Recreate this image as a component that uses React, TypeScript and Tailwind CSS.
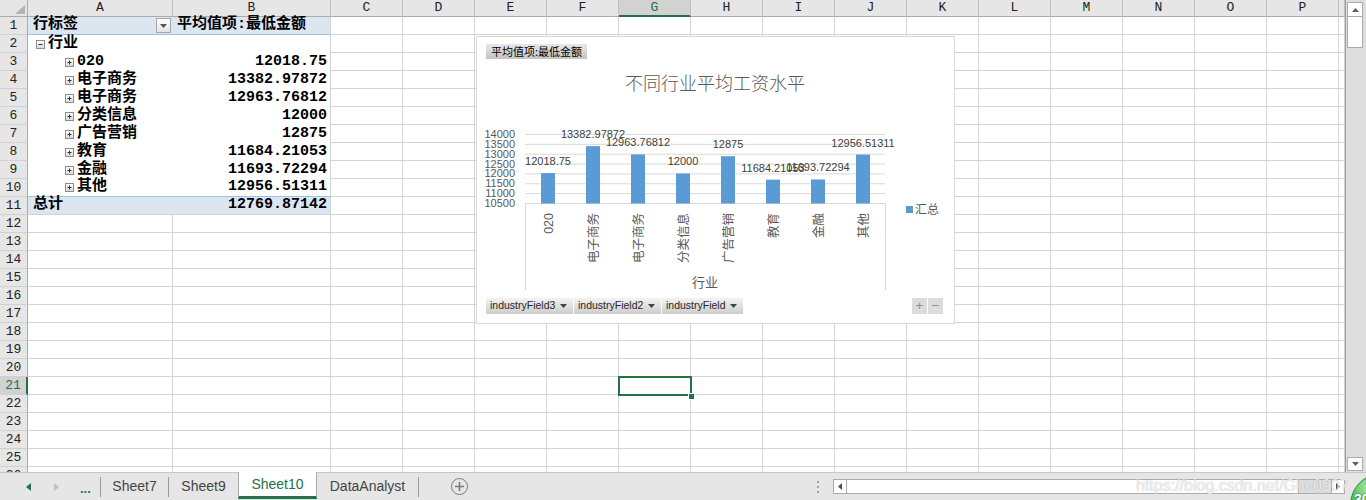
import React from 'react';

const COLS = ['A', 'B', 'C', 'D', 'E', 'F', 'G', 'H', 'I', 'J', 'K', 'L', 'M', 'N', 'O', 'P', 'Q'];

const widthOf = (c: string) =>
  c === 'A' ? 'w-[145px]' : c === 'B' ? 'w-[158px]' : c === 'Q' ? 'w-[6px]' : 'w-[72px]';

const pivotRows = [
  { kind: 'head', label: '行标签', value: '平均值项:最低金额' },
  { kind: 'group', label: '行业', value: '' },
  { kind: 'item', label: '020', value: '12018.75' },
  { kind: 'item', label: '电子商务', value: '13382.97872' },
  { kind: 'item', label: '电子商务', value: '12963.76812' },
  { kind: 'item', label: '分类信息', value: '12000' },
  { kind: 'item', label: '广告营销', value: '12875' },
  { kind: 'item', label: '教育', value: '11684.21053' },
  { kind: 'item', label: '金融', value: '11693.72294' },
  { kind: 'item', label: '其他', value: '12956.51311' },
  { kind: 'total', label: '总计', value: '12769.87142' },
];

const bars = [
  { name: '020', v: 12018.75, label: '12018.75' },
  { name: '电子商务', v: 13382.97872, label: '13382.97872' },
  { name: '电子商务', v: 12963.76812, label: '12963.76812' },
  { name: '分类信息', v: 12000, label: '12000' },
  { name: '广告营销', v: 12875, label: '12875' },
  { name: '教育', v: 11684.21053, label: '11684.21053' },
  { name: '金融', v: 11693.72294, label: '11693.72294' },
  { name: '其他', v: 12956.51311, label: '12956.51311' },
];

function ExpandBox({ open }: { open: boolean }) {
  return (
    <svg width="9" height="9" viewBox="0 0 9 9" className="shrink-0">
      <defs>
        <linearGradient id={open ? 'bxo' : 'bxc'} x1="0" y1="0" x2="0" y2="1">
          <stop offset="0" stopColor="#ffffff" />
          <stop offset="1" stopColor="#d8d8d8" />
        </linearGradient>
      </defs>
      <rect x="0.5" y="0.5" width="8" height="8" fill={`url(#${open ? 'bxo' : 'bxc'})`} stroke="#8c8c8c" />
      <path d="M2.5 4.5h4" stroke="#333" />
      {!open && <path d="M4.5 2.5v4" stroke="#333" />}
    </svg>
  );
}

function PivotCells({ row }: { row: number }) {
  const r = pivotRows[row - 1];
  const blue = r.kind === 'head' || r.kind === 'total';
  const bottom =
    row === 1 || row === 10
      ? 'border-b border-[#9bc2e6]'
      : row === 11
      ? 'border-b border-[#d4d4d4]'
      : '';
  const bg = blue ? 'bg-[#dce6f1]' : 'bg-white';
  return (
    <>
      <div className={`w-[145px] h-full shrink-0 flex items-center ${bg} ${bottom} relative`}>
        {r.kind === 'head' && (
          <>
            <span className="pl-[5px]">{r.label}</span>
            <div className="absolute right-[2px] top-[1px] w-[15px] h-[15px] border border-[#a6a6a6] bg-linear-to-b from-[#ffffff] to-[#e4e4e4] flex items-center justify-center">
              <svg width="7" height="4" viewBox="0 0 7 4">
                <path d="M0 0h7L3.5 4z" fill="#555" />
              </svg>
            </div>
          </>
        )}
        {r.kind === 'total' && <span className="pl-[5px]">{r.label}</span>}
        {r.kind === 'group' && (
          <div className="flex items-center pl-[8px] gap-[3px]">
            <ExpandBox open />
            <span>{r.label}</span>
          </div>
        )}
        {r.kind === 'item' && (
          <div className="flex items-center pl-[37px] gap-[3px]">
            <ExpandBox open={false} />
            <span>{r.label}</span>
          </div>
        )}
      </div>
      <div
        className={`w-[158px] h-full shrink-0 flex items-center border-r border-r-[#d4d4d4] ${bg} ${bottom} ${
          r.kind === 'head' ? 'justify-start pl-[4px]' : 'justify-end pr-[3px]'
        }`}
      >
        {r.value}
      </div>
    </>
  );
}

function GridRow({ row }: { row: number }) {
  const active = row === 21;
  return (
    <div className="flex h-[18px] shrink-0">
      <div
        className={`w-[28px] h-full shrink-0 flex items-center justify-center text-[13px] font-normal border-b border-b-[#d0d0d0] ${
          active
            ? 'bg-[#d2d2d2] text-[#217346] border-r-2 border-r-[#217346]'
            : 'bg-[#e6e6e6] text-[#222] border-r border-r-[#ababab]'
        } font-['Liberation_Mono',monospace]`}
      >
        {row}
      </div>
      {COLS.map((c) => {
        if (row <= 11 && (c === 'A' || c === 'B')) {
          return c === 'A' ? <PivotCells key={c} row={row} /> : null;
        }
        const sel = row === 21 && c === 'G';
        return (
          <div
            key={c}
            className={`${widthOf(c)} h-full shrink-0 border-r border-b border-[#d4d4d4] ${sel ? 'relative' : ''}`}
          >
            {sel && (
              <>
                <div className="absolute -left-[1px] -top-[1px] w-[74px] h-[20px] border-2 border-[#217346] z-10" />
                <div className="absolute left-[69px] top-[16px] w-[7px] h-[7px] bg-[#217346] border border-white z-20" />
              </>
            )}
          </div>
        );
      })}
    </div>
  );
}

function FieldButton({ label, w }: { label: string; w: string }) {
  return (
    <div
      className={`${w} h-[16px] flex items-center justify-between pl-[4px] pr-[6px] bg-linear-to-b from-[#f4f4f4] to-[#cdcdcd] text-[10.5px] text-[#262626] font-['Liberation_Sans',sans-serif]`}
    >
      <span>{label}</span>
      <svg width="7" height="4" viewBox="0 0 7 4">
        <path d="M0 0h7L3.5 4z" fill="#404040" />
      </svg>
    </div>
  );
}

function Chart() {
  const y = (v: number) => 166 - ((v - 10500) * 69) / 3500;
  const ticks = [14000, 13500, 13000, 12500, 12000, 11500, 11000, 10500];
  const sans = 'Liberation Sans, Noto Sans CJK SC, sans-serif';
  const cjk = 'Noto Sans CJK SC, sans-serif';
  return (
    <div className="absolute left-[476px] top-[36px] w-[479px] h-[288px] bg-white border border-[#d9d9d9] z-10 flex flex-col justify-between px-[9px] pt-[7px] pb-[9px] font-normal">
      <svg className="absolute left-0 top-0" width="477" height="286">
        <text x="238" y="53" textAnchor="middle" fontSize="18" fill="#595959" fontFamily={cjk} fontWeight="300">
          不同行业平均工资水平
        </text>
        {ticks.map((t) => (
          <g key={t}>
            <line x1="48" x2="408" y1={y(t) + 0.5} y2={y(t) + 0.5} stroke="#d9d9d9" />
            <text x="38" y={y(t) + 4} textAnchor="end" fontSize="11" fill="#595959" fontFamily={sans}>
              {t}
            </text>
          </g>
        ))}
        <line x1="48.5" x2="48.5" y1="166" y2="253" stroke="#d9d9d9" />
        <line x1="408.5" x2="408.5" y1="166" y2="253" stroke="#d9d9d9" />
        {bars.map((b, i) => {
          const cx = 71 + i * 45;
          const top = y(b.v);
          return (
            <g key={i}>
              <rect x={cx - 7} y={top} width="14" height={166.5 - top} fill="#5b9bd5" />
              <text x={cx} y={top - 8} textAnchor="middle" fontSize="11" fill="#404040" fontFamily={sans}>
                {b.label}
              </text>
              <text
                transform={`translate(${cx + 5},176) rotate(-90)`}
                textAnchor="end"
                fontSize="12.5"
                fill="#595959"
                fontFamily={sans}
              >
                {b.name}
              </text>
            </g>
          );
        })}
        <text x="228" y="250" textAnchor="middle" fontSize="13" fill="#595959" fontFamily={cjk}>
          行业
        </text>
        <rect x="429" y="169" width="7" height="7" fill="#5b9bd5" />
        <text x="438" y="177" fontSize="12" fill="#595959" fontFamily={cjk}>
          汇总
        </text>
      </svg>
      <div className="relative flex">
        <div className="h-[15px] px-[5px] flex items-center bg-linear-to-b from-[#e8e8e8] to-[#c4c4c4] text-[11px] text-black font-['Noto_Sans_CJK_SC',sans-serif]">
          平均值项:最低金额
        </div>
      </div>
      <div className="relative flex items-center gap-[1px]">
        <FieldButton label="industryField3" w="w-[87px]" />
        <FieldButton label="industryField2" w="w-[87px]" />
        <FieldButton label="industryField" w="w-[81px]" />
        <div className="ml-auto mr-[2px] flex gap-[1px]">
          <div className="w-[15px] h-[16px] bg-[#dcdcdc] flex items-center justify-center text-[#8f8f8f] text-[13px] leading-none">+</div>
          <div className="w-[15px] h-[16px] bg-[#dcdcdc] flex items-center justify-center text-[#8f8f8f] text-[13px] leading-none">−</div>
        </div>
      </div>
    </div>
  );
}

function VScroll() {
  return (
    <div className="w-[20px] h-full bg-[#dedede] flex flex-col items-start pl-[1px]">
      <div className="mt-[2px] w-[16px] h-[15px] bg-white border border-[#ababab] flex items-center justify-center">
        <svg width="7" height="4" viewBox="0 0 7 4">
          <path d="M3.5 0L7 4H0z" fill="#606060" />
        </svg>
      </div>
      <div className="w-[16px] h-[32px] bg-white border border-[#ababab] -mt-[1px]" />
      <div className="mt-auto mb-[1px] w-[16px] h-[14px] bg-white border border-[#ababab] flex items-center justify-center">
        <svg width="7" height="4" viewBox="0 0 7 4">
          <path d="M0 0h7L3.5 4z" fill="#606060" />
        </svg>
      </div>
    </div>
  );
}

function Tab({ label, w, active }: { label: string; w: string; active?: boolean }) {
  return (
    <div
      className={`${w} h-full flex items-center justify-center text-[14px] ${
        active
          ? 'bg-white text-[#217346] border-x border-[#ababab] border-b-[3px] border-b-[#217346] -mt-[1px]'
          : 'text-[#444]'
      }`}
    >
      {label}
    </div>
  );
}

function Sep() {
  return <div className="w-px h-[20px] self-center bg-[#9a9a9a] shrink-0" />;
}

function TabBar() {
  return (
    <div className="flex h-[28px] bg-[#e6e6e6] border-t border-[#c6c6c6] font-['Liberation_Sans',sans-serif] relative">
      <div className="w-[100px] flex items-center shrink-0">
        <svg width="5" height="8" viewBox="0 0 5 8" className="ml-[26px]">
          <path d="M5 0v8L0 4z" fill="#217346" />
        </svg>
        <svg width="5" height="8" viewBox="0 0 5 8" className="ml-[23px]">
          <path d="M0 0v8l5-4z" fill="#c0c0c0" />
        </svg>
        <span className="ml-[21px] text-[#217346] font-bold text-[13px] leading-none pt-[3px]">...</span>
      </div>
      <Sep />
      <Tab label="Sheet7" w="w-[67px]" />
      <Sep />
      <Tab label="Sheet9" w="w-[69px]" />
      <Tab label="Sheet10" w="w-[79px]" active />
      <Tab label="DataAnalyst" w="w-[101px]" />
      <Sep />
      <div className="ml-[32px] flex items-center">
        <div className="w-[17px] h-[17px] rounded-full border-[1.5px] border-[#7a7a7a] flex items-center justify-center">
          <svg width="9" height="9" viewBox="0 0 9 9">
            <path d="M4.5 0v9M0 4.5h9" stroke="#7a7a7a" strokeWidth="1.5" />
          </svg>
        </div>
      </div>
      <div className="ml-[349px] flex flex-col justify-center gap-[3px]">
        <div className="w-[2px] h-[2px] bg-[#a0a0a0]" />
        <div className="w-[2px] h-[2px] bg-[#a0a0a0]" />
        <div className="w-[2px] h-[2px] bg-[#a0a0a0]" />
      </div>
      <div className="ml-[14px] flex items-center">
        <div className="w-[512px] h-[15px] flex border border-[#ababab] bg-[#dcdcdc]">
          <div className="w-[13px] h-full bg-white border-r border-[#ababab] flex items-center justify-center">
            <svg width="4" height="7" viewBox="0 0 4 7">
              <path d="M4 0v7L0 3.5z" fill="#505050" />
            </svg>
          </div>
          <div className="w-[452px] h-full bg-white border-r border-[#ababab]" />
          <div className="ml-auto w-[13px] h-full bg-white border-l border-[#ababab] flex items-center justify-center">
            <svg width="4" height="7" viewBox="0 0 4 7">
              <path d="M0 0v7l4-3.5z" fill="#505050" />
            </svg>
          </div>
        </div>
      </div>
    </div>
  );
}

export default function App() {
  return (
    <div className="w-[1366px] h-[500px] relative overflow-hidden bg-white font-['Liberation_Mono','Noto_Sans_CJK_SC',monospace]">
      <div className="flex h-[472px]">
        <div className="relative w-[1346px] h-full overflow-hidden border-r border-[#9a9a9a] flex flex-col">
          <div className="flex h-[17px] shrink-0 text-[13px]">
            <div className="w-[28px] h-full shrink-0 bg-[#e6e6e6] border-r border-b border-[#ababab] flex items-end justify-end pr-[2px] pb-[2px]">
              <svg width="10" height="9" viewBox="0 0 10 9">
                <path d="M10 0v9H0z" fill="#b4b4b4" />
              </svg>
            </div>
            {COLS.map((c) => {
              const act = c === 'G';
              return (
                <div
                  key={c}
                  className={`${widthOf(c)} h-full shrink-0 flex items-center justify-center border-r border-r-[#c0c0c0] ${
                    act
                      ? 'bg-[#d2d2d2] text-[#217346] border-b-2 border-b-[#217346]'
                      : 'bg-[#e6e6e6] text-[#222] border-b border-b-[#ababab]'
                  }`}
                >
                  {c === 'Q' ? '' : c}
                </div>
              );
            })}
          </div>
          <div className="flex flex-col text-[15px] font-bold text-black">
            {Array.from({ length: 26 }, (_, i) => (
              <GridRow key={i} row={i + 1} />
            ))}
          </div>
          <Chart />
        </div>
        <VScroll />
      </div>
      <TabBar />
      <div className="absolute left-[1136px] top-[474px] text-[16px] text-white/80 font-['Liberation_Sans',sans-serif] [text-shadow:0_0_1px_rgba(0,0,0,0.35)] pointer-events-none">
        https://blog.csdn.net/Ghc0907
      </div>
      <div className="absolute left-[1350px] top-[473px] w-[64px] h-[64px] rounded-full border border-[#2e8b3a] bg-[radial-gradient(circle_at_35%_25%,#b8f0b0,#3cb34a_45%,#1f8a2e)] pl-[3px] pt-[15px] text-[14px] font-bold text-white font-['Liberation_Sans',sans-serif] [text-shadow:0_0_2px_#0b5a18]">
        30
      </div>
    </div>
  );
}
